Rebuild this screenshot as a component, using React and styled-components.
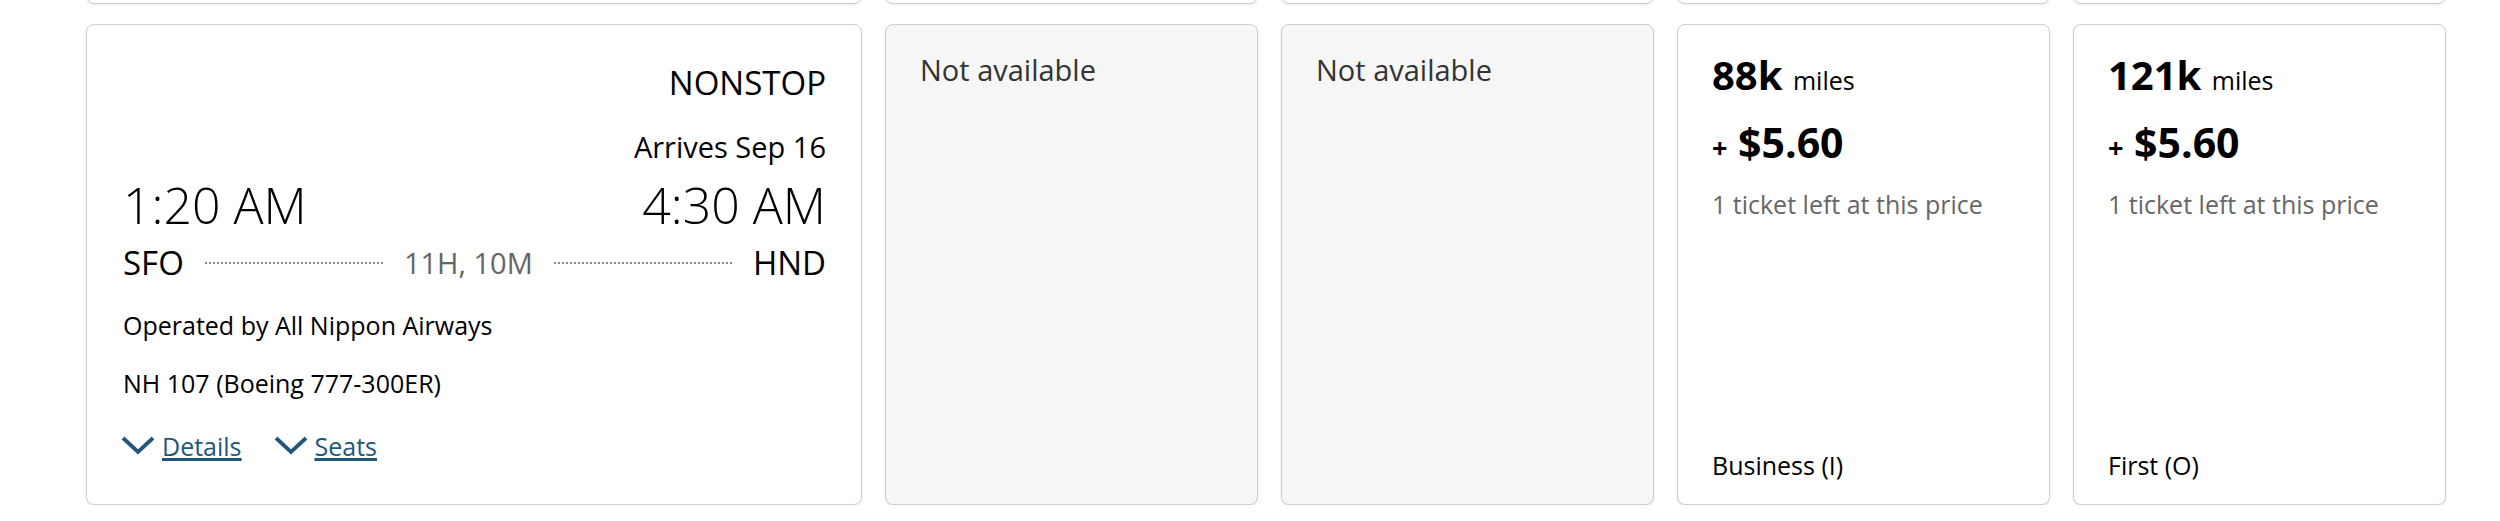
import React from "react";
import styled, { createGlobalStyle } from "styled-components";

const GlobalStyle = createGlobalStyle`
  body {
    margin: 0;
    background: #fff;
    font-family: "Open Sans", "Liberation Sans", sans-serif;
    color: #000;
  }
`;

const fares = [
  { miles: "88k", fee: "5.60", left: "1 ticket left at this price", cabin: "Business (I)" },
  { miles: "121k", fee: "5.60", left: "1 ticket left at this price", cabin: "First (O)" },
];

export default function App() {
  return (
    <>
      <GlobalStyle />
      <Page>
        <PrevRow>
          <PrevCard />
          <PrevCard />
          <PrevCard />
          <PrevCard />
          <PrevCard />
        </PrevRow>
        <Row>
          <FlightCard>
            <Stops>NONSTOP</Stops>
            <Arrives>Arrives Sep 16</Arrives>
            <Times>
              <span>1:20 AM</span>
              <span>4:30 AM</span>
            </Times>
            <Route>
              <span>SFO</span>
              <Dots />
              <Duration>11H, 10M</Duration>
              <Dots />
              <span>HND</span>
            </Route>
            <Info $gap={27}>Operated by All Nippon Airways</Info>
            <Info $gap={28}>NH 107 (Boeing 777-300ER)</Info>
            <Links>
              <ToggleLink href="#">
                <Chevron />
                <span>Details</span>
              </ToggleLink>
              <ToggleLink href="#">
                <Chevron />
                <span>Seats</span>
              </ToggleLink>
            </Links>
          </FlightCard>
          <FareCard $muted>
            <NotAvailable>Not available</NotAvailable>
          </FareCard>
          <FareCard $muted>
            <NotAvailable>Not available</NotAvailable>
          </FareCard>
          {fares.map((f) => (
            <FareCard key={f.cabin}>
              <Miles>
                {f.miles} <small>miles</small>
              </Miles>
              <Fee>
                <small>+</small> ${f.fee}
              </Fee>
              <SeatsLeft>{f.left}</SeatsLeft>
              <Cabin>{f.cabin}</Cabin>
            </FareCard>
          ))}
        </Row>
      </Page>
    </>
  );
}

function Chevron() {
  return (
    <svg width="34" height="19" viewBox="0 0 34 19" fill="none">
      <path d="M2 2 L17 16 L32 2" stroke="currentColor" strokeWidth="3.8" />
    </svg>
  );
}

const Page = styled.div`
  padding-left: 86px;
  overflow: hidden;
`;

const grid = `
  display: grid;
  grid-template-columns: 776px repeat(4, 373px);
  column-gap: 23px;
`;

const PrevRow = styled.div`
  ${grid}
  margin-top: -100px;
`;

const PrevCard = styled.div`
  height: 104px;
  border: 1px solid #cdcdcd;
  border-radius: 8px;
  box-shadow: 0 1px 2px rgba(0, 0, 0, 0.08);
  box-sizing: border-box;
`;

const Row = styled.div`
  ${grid}
  margin-top: 20px;
`;

const Card = styled.div`
  height: 481px;
  box-sizing: border-box;
  border: 1px solid #cdcdcd;
  border-radius: 8px;
  box-shadow: 0 1px 2px rgba(0, 0, 0, 0.1);
  display: flex;
  flex-direction: column;
  line-height: 1.2;
`;

const FlightCard = styled(Card)`
  padding: 38px 35px 0 34px;
`;

const FareCard = styled(Card)`
  padding: 28px 34px 24px 34px;
  background: ${(p) => (p.$muted ? "#f6f6f6" : "#fff")};
`;

const Stops = styled.div`
  font-size: 33px;
  text-align: right;
`;

const Arrives = styled.div`
  font-size: 29px;
  text-align: right;
  margin-top: 27px;
`;

const Times = styled.div`
  display: flex;
  justify-content: space-between;
  font-size: 50px;
  font-weight: 300;
  margin-top: 11px;
  padding-left: 2px;
`;

const Route = styled.div`
  display: flex;
  align-items: center;
  font-size: 33px;
  margin-top: 8px;
  padding-left: 2px;
`;

const Dots = styled.div`
  flex: 1;
  margin: 0 21px;
  border-top: 2px dotted #8a8a8a;
`;

const Duration = styled.span`
  font-size: 29px;
  color: #666;
`;

const Info = styled.div`
  font-size: 25px;
  padding-left: 2px;
  margin-top: ${(p) => p.$gap}px;
`;

const Links = styled.div`
  display: flex;
  gap: 32px;
  margin-top: 33px;
`;

const ToggleLink = styled.a`
  display: flex;
  align-items: center;
  gap: 7px;
  font-size: 25px;
  color: #22577a;
  span {
    text-decoration: underline;
    text-underline-offset: 3px;
    text-decoration-thickness: 2px;
  }
`;

const NotAvailable = styled.div`
  font-size: 29px;
  color: #333;
`;

const Miles = styled.div`
  font-size: 40px;
  font-weight: 700;
  line-height: 44px;
  small {
    font-size: 25px;
    font-weight: 400;
  }
`;

const Fee = styled.div`
  font-size: 41px;
  font-weight: 700;
  line-height: 48px;
  margin-top: 16px;
  small {
    font-size: 27px;
  }
`;

const SeatsLeft = styled.div`
  font-size: 25px;
  color: #666;
  margin-top: 17px;
`;

const Cabin = styled.div`
  font-size: 25px;
  margin-top: auto;
`;
